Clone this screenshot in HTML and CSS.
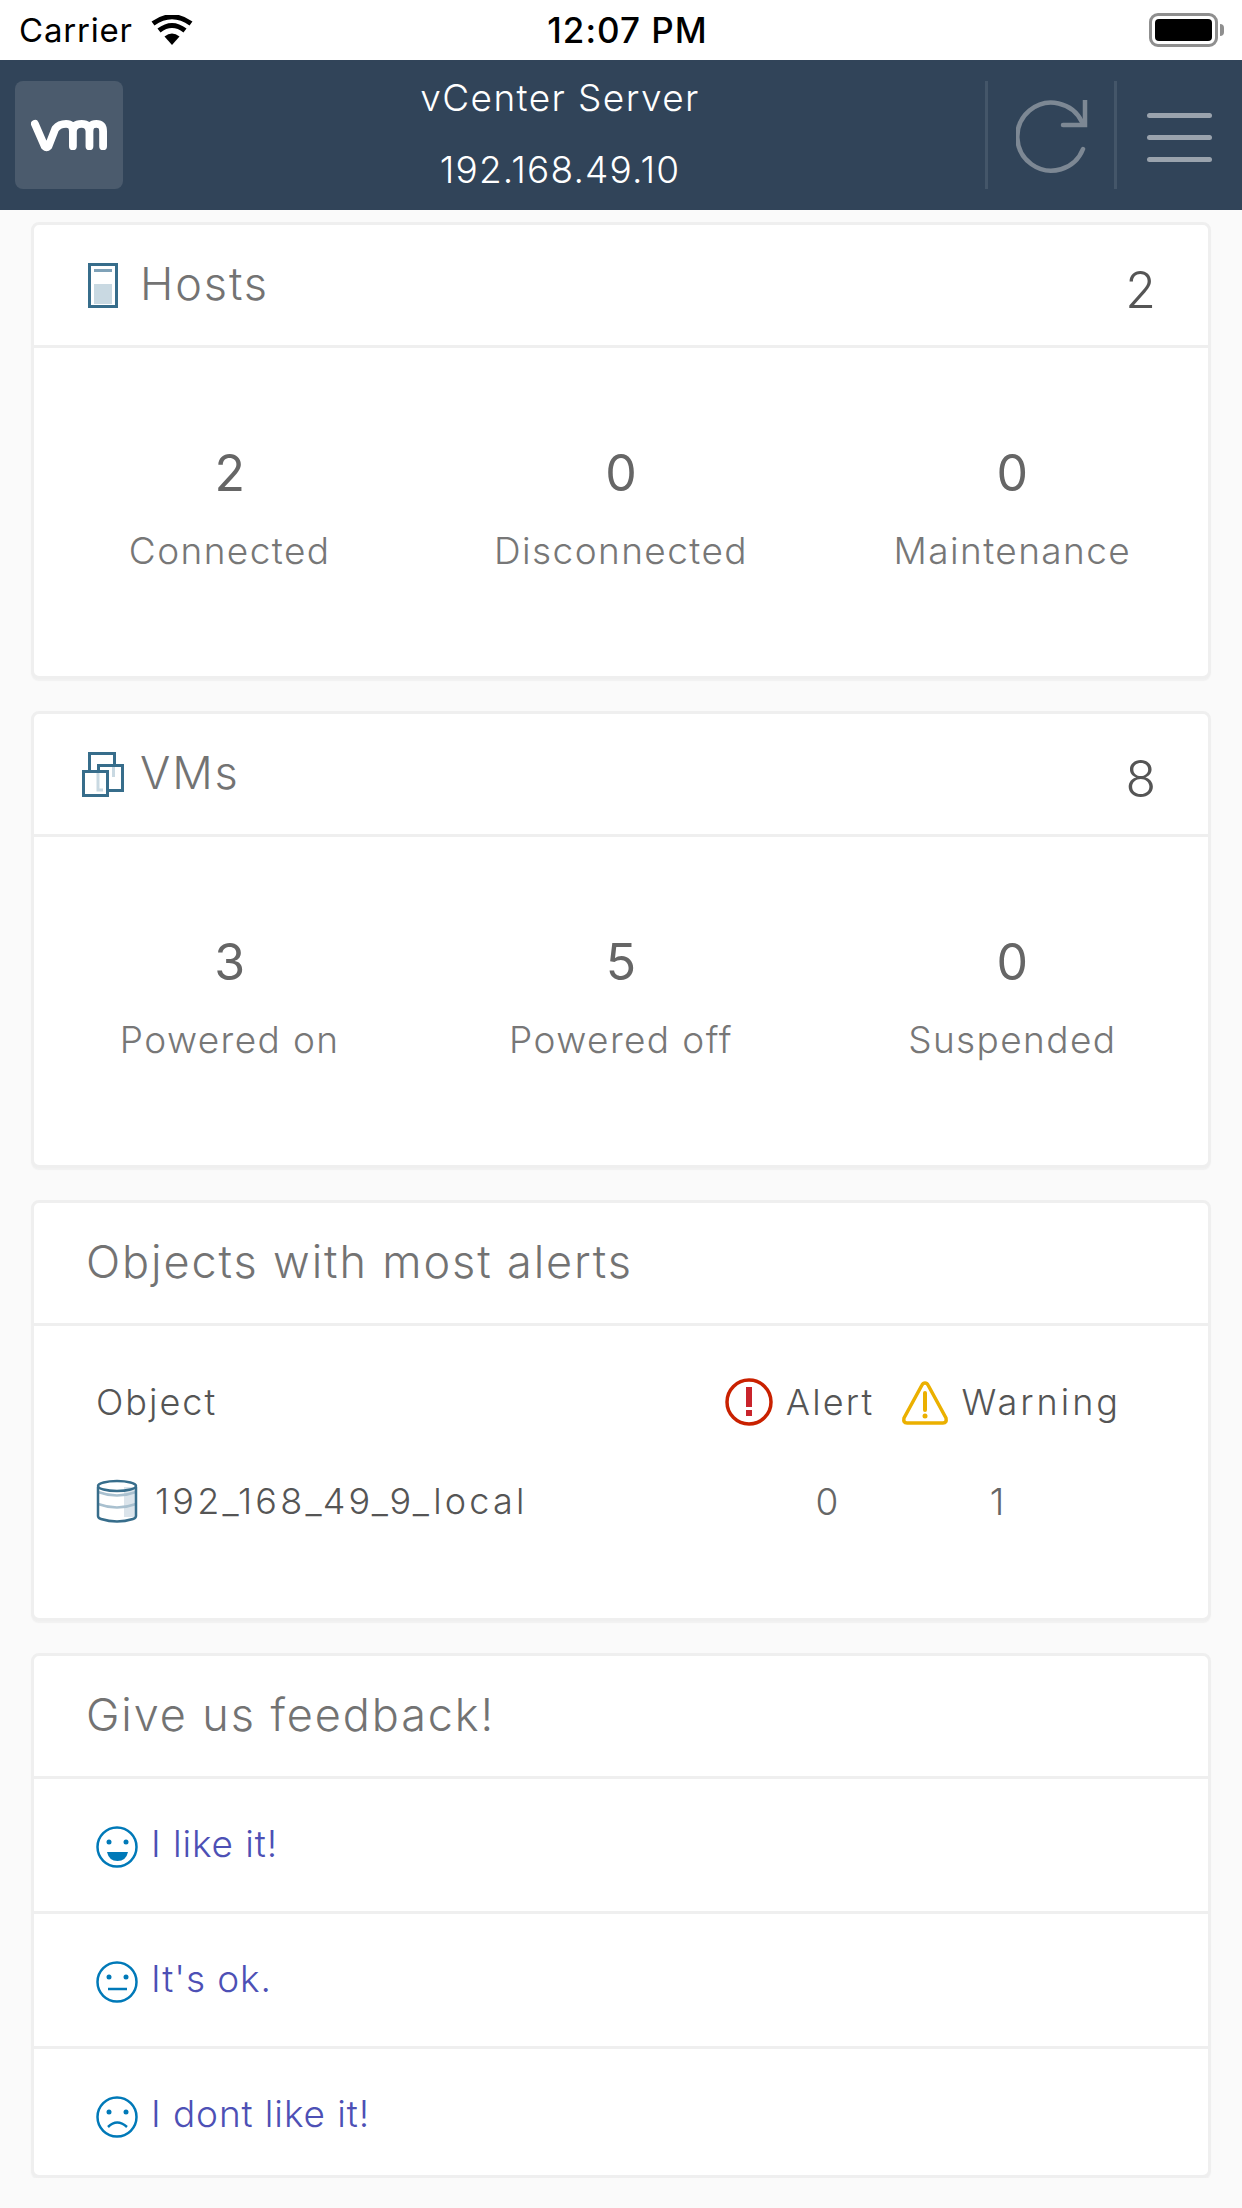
FILE: index.html
```html
<!DOCTYPE html>
<html lang="en">
<head>
  <meta charset="UTF-8" />
  <meta name="viewport" content="width=device-width, initial-scale=1.0" />
  <title>vCenter Server</title>
  <link rel="stylesheet" href="styles.css">
</head>
<body>
  <!-- Status bar -->
  <div class="status-bar">
    <div class="status-left">
      <span>Carrier</span>
      <svg class="wifi" viewBox="0 0 42 30" width="42" height="30">
        <path d="M21 30 L13.5 21.5 Q21 15.5 28.500 21.500 Z" fill="#000"/>
        <path d="M8 15.500 Q21 5.500 34 15.500" fill="none" stroke="#000" stroke-width="5"/>
        <path d="M2 8.500 Q21 -5 40 8.500" fill="none" stroke="#000" stroke-width="5"/>
      </svg>
    </div>
    <div class="status-time">12:07 PM</div>
    <div class="battery">
      <div class="battery-body"><div class="battery-fill"></div></div>
      <div class="battery-nub"></div>
    </div>
  </div>

  <!-- Nav -->
  <div class="navbar">
    <div class="logo">
      <svg viewBox="0 0 78 34" width="76" height="33" preserveAspectRatio="none">
        <path d="M4 5 L14 28 Q16 30 18 28 L25 10 Q29 5 36 5 Q43 5 43 13 V28 M43 13 Q43 5 52 5 Q60 5 60 13 V28 M60 13 Q60 5 67 5 Q74 5 74 13 V28" fill="none" stroke="#fff" stroke-width="8" stroke-linecap="round" stroke-linejoin="round"/>
      </svg>
    </div>
    <div class="nav-title">
      <div class="nav-name">vCenter Server</div>
      <div class="nav-ip">192.168.49.10</div>
    </div>
    <div class="nav-button refresh">
      <svg viewBox="0 0 72 74" width="72" height="74">
        <path d="M67 49 A34 34 0 1 1 66 22" fill="none" stroke="#7d8894" stroke-width="4.500" stroke-linecap="round"/>
        <path d="M69 0 V25 H47" fill="none" stroke="#7d8894" stroke-width="4.500" stroke-linecap="round"/>
      </svg>
    </div>
    <div class="nav-button menu">
      <div class="menu-line"></div>
      <div class="menu-line"></div>
      <div class="menu-line"></div>
    </div>
  </div>

  <div class="content">
    <!-- Hosts -->
    <div class="card">
      <div class="card-header">
        <div class="header-icon">
          <svg viewBox="0 0 30 45" width="30" height="45">
            <rect x="1.500" y="1.500" width="27" height="42" fill="#fff" stroke="#376d8b" stroke-width="3"/>
            <rect x="6" y="6" width="18" height="3" fill="#7fa2b8"/>
            <rect x="6" y="21" width="18" height="20" fill="#c9d9e2"/>
          </svg>
        </div>
        <div class="card-title">Hosts</div>
        <div class="card-count">2</div>
      </div>
      <div class="stats">
        <div class="stat"><div class="stat-num">2</div><div class="stat-label">Connected</div></div>
        <div class="stat"><div class="stat-num">0</div><div class="stat-label">Disconnected</div></div>
        <div class="stat"><div class="stat-num">0</div><div class="stat-label">Maintenance</div></div>
      </div>
    </div>

    <!-- VMs -->
    <div class="card">
      <div class="card-header">
        <div class="header-icon">
          <svg viewBox="0 0 42 45" width="42" height="45">
            <rect x="7.500" y="1.500" width="25" height="24" fill="#fff" stroke="#376d8b" stroke-width="3"/>
            <rect x="16.500" y="13.500" width="24" height="25" fill="#fff" stroke="#376d8b" stroke-width="3"/>
            <rect x="30" y="15" width="3" height="10" fill="#c9d9e2"/>
            <rect x="1.500" y="19.500" width="24" height="24" fill="#fff" stroke="#376d8b" stroke-width="3"/>
            <path d="M16 21 V38 H21" fill="none" stroke="#c9d9e2" stroke-width="3"/>
          </svg>
        </div>
        <div class="card-title">VMs</div>
        <div class="card-count">8</div>
      </div>
      <div class="stats">
        <div class="stat"><div class="stat-num">3</div><div class="stat-label">Powered on</div></div>
        <div class="stat"><div class="stat-num">5</div><div class="stat-label">Powered off</div></div>
        <div class="stat"><div class="stat-num">0</div><div class="stat-label">Suspended</div></div>
      </div>
    </div>

    <!-- Alerts table -->
    <div class="card">
      <div class="card-header plain">
        <div class="card-title">Objects with most alerts</div>
      </div>
      <div class="alerts">
        <div class="alerts-row">
          <div class="alerts-name object-head">Object</div>
          <svg class="alert-icon" viewBox="0 0 48 48" width="48" height="48">
            <circle cx="24" cy="24" r="22" fill="none" stroke="#c92100" stroke-width="3.500"/>
            <rect x="21" y="9" width="6" height="20" fill="#c9242b"/>
            <rect x="21" y="32" width="6" height="6" fill="#c9242b"/>
          </svg>
          <div class="alerts-head">Alert</div>
          <svg class="warn-icon" viewBox="0 0 48 45" width="48" height="45">
            <path d="M24 3 Q26 3 27 5 L45 38 Q46 43 42 43 H6 Q2 43 3 38 L21 5 Q22 3 24 3 Z" fill="none" stroke="#ebb000" stroke-width="3.500" stroke-linejoin="round"/>
            <path d="M24 13 V30" stroke="#ebb000" stroke-width="4" stroke-linecap="round"/>
            <circle cx="24" cy="36" r="2.500" fill="#ebb000"/>
          </svg>
          <div class="alerts-head wide">Warning</div>
        </div>
        <div class="alerts-row data-row">
          <svg class="db-icon" viewBox="0 0 42 44" width="42" height="44">
            <path d="M28 8 H40 V38 H28 Z" fill="#dbe4eb"/>
            <path d="M2 13 Q21 20 40 13 M2 25 Q21 32 40 25" fill="none" stroke="#a9c0cf" stroke-width="2.500"/>
            <path d="M2 8 V37 Q2 39 5 40 Q21 45 37 40 Q40 39 40 37 V8" fill="none" stroke="#376d8b" stroke-width="2.500"/>
            <ellipse cx="21" cy="7" rx="19" ry="5" fill="none" stroke="#376d8b" stroke-width="2.500"/>
          </svg>
          <div class="alerts-name object-name">192_168_49_9_local</div>
          <div class="alerts-count first">0</div>
          <div class="alerts-count last">1</div>
        </div>
      </div>
    </div>

    <!-- Feedback -->
    <div class="card">
      <div class="card-header plain">
        <div class="card-title">Give us feedback!</div>
      </div>
      <a class="feedback-row">
        <svg class="face" viewBox="0 0 42 42" width="42" height="42">
          <circle cx="21" cy="21" r="19.500" fill="none" stroke="#0079b8" stroke-width="2.500"/>
          <circle cx="13" cy="16" r="2.500" fill="#0079b8"/>
          <circle cx="30" cy="16" r="2.500" fill="#0079b8"/>
          <path d="M11 26 H32 Q30 35 21.500 35 Q13 35 11 26 Z" fill="#0079b8"/>
        </svg>
        <span>I like it!</span>
      </a>
      <a class="feedback-row">
        <svg class="face" viewBox="0 0 42 42" width="42" height="42">
          <circle cx="21" cy="21" r="19.500" fill="none" stroke="#0079b8" stroke-width="2.500"/>
          <circle cx="13" cy="16" r="2.500" fill="#0079b8"/>
          <circle cx="30" cy="16" r="2.500" fill="#0079b8"/>
          <path d="M12 28 H31" fill="none" stroke="#0079b8" stroke-width="2.500"/>
        </svg>
        <span>It's ok.</span>
      </a>
      <a class="feedback-row">
        <svg class="face" viewBox="0 0 42 42" width="42" height="42">
          <circle cx="21" cy="21" r="19.500" fill="none" stroke="#0079b8" stroke-width="2.500"/>
          <circle cx="13" cy="16" r="2.500" fill="#0079b8"/>
          <circle cx="30" cy="16" r="2.500" fill="#0079b8"/>
          <path d="M12 31 Q21 22 31 31" fill="none" stroke="#0079b8" stroke-width="2.500"/>
        </svg>
        <span>I dont like it!</span>
      </a>
    </div>
  </div>
</body>
</html>
```

FILE: styles.css
```css
body {
  font-family: 'Inter', 'Lato', sans-serif;
  font-weight: 300;
  margin: 0;
  padding: 0;
  background-color: #fafafa;
  color: #666;
}
.status-bar {
  height: 60px;
  background-color: #fff;
  display: grid;
  grid-template-columns: 1fr auto 1fr;
  align-items: center;
  color: #000;
  font-size: 33px;
  font-weight: 400;
  padding: 0 18px 0 19px;
}
.status-left {
  display: flex;
  align-items: center;
  gap: 18px;
  letter-spacing: 0.8px;
}
.status-time {
  font-size: 35px;
  font-weight: 500;
  letter-spacing: 1px;
  margin-left: 12px;
}
.wifi {
  display: block;
}
.battery {
  display: flex;
  align-items: center;
  justify-content: flex-end;
  gap: 2px;
}
.battery-body {
  width: 69px;
  height: 34px;
  box-sizing: border-box;
  border: 3px solid #8f8f8f;
  border-radius: 9px;
  padding: 3px;
}
.battery-fill {
  height: 100%;
  background-color: #000;
  border-radius: 4px;
}
.battery-nub {
  width: 4px;
  height: 12px;
  background-color: #8f8f8f;
  border-radius: 0 4px 4px 0;
}
.navbar {
  height: 150px;
  box-sizing: border-box;
  background-color: #314459;
  display: flex;
  padding: 21px 0 21px 15px;
}
.logo {
  width: 108px;
  background-color: #4b5b6d;
  border-radius: 8px;
  display: flex;
  align-items: center;
  justify-content: center;
}
.nav-title {
  flex: 1;
  padding-left: 12px;
  color: #fff;
  font-size: 37px;
  text-align: center;
  display: flex;
  flex-direction: column;
  justify-content: space-between;
  line-height: 46px;
  margin: -6px 0 -4px;
}
.nav-name {
  letter-spacing: 1.4px;
}
.nav-ip {
  letter-spacing: 1.2px;
}
.nav-button {
  border-left: 3px solid #445669;
  box-sizing: border-box;
  width: 129px;
}
.refresh {
  padding: 19px 0 0 28px;
}
.menu {
  width: 128px;
  padding: 32px 0 0 30px;
  display: flex;
  flex-direction: column;
  gap: 17px;
}
.menu-line {
  width: 65px;
  height: 5px;
  background-color: #9aa3ad;
  border-radius: 3px;
}
.content {
  padding: 12px 31px 0;
  display: flex;
  flex-direction: column;
  gap: 32px;
}
.card {
  background-color: #fff;
  border: 3px solid #efefef;
  border-radius: 8px;
  box-shadow: 0 2px 1px #f1f1f1;
}
.card-header {
  box-sizing: border-box;
  border-bottom: 3px solid #efefef;
  height: 123px;
  display: flex;
  align-items: center;
  padding: 0 52px 0 48px;
}
.card-header.plain {
  padding-left: 52px;
}
.header-icon {
  width: 42px;
  margin-right: 16px;
  display: flex;
  justify-content: center;
}
.header-icon svg {
  display: block;
}
.card-title {
  flex: 1;
  font-size: 45px;
  color: #737373;
  margin-top: -4px;
  letter-spacing: 1.9px;
}
.card-count {
  font-size: 50px;
  color: #555;
  margin-top: 10px;
}
.stats {
  height: 328px;
  display: grid;
  grid-template-columns: 1fr 1fr 1fr;
  align-items: center;
  text-align: center;
}
.stat {
  padding-bottom: 7px;
}
.stat-num {
  font-size: 50px;
  font-weight: 400;
  color: #666;
  line-height: 60px;
  margin-bottom: 25px;
}
.stat-label {
  font-size: 37px;
  color: #777;
  line-height: 46px;
  letter-spacing: 1.4px;
}
.alerts {
  padding: 38px 87px 79px 62px;
}
.alerts-row {
  height: 76px;
  display: flex;
  align-items: center;
  font-size: 36px;
  color: #555;
}
.data-row {
  margin-top: 23px;
}
.alerts-name {
  flex: 1;
}
.object-head {
  letter-spacing: 2px;
}
.object-name {
  letter-spacing: 3.2px;
}
.alerts-head {
  letter-spacing: 2.2px;
}
.alerts-head.wide {
  letter-spacing: 3px;
}
.alert-icon {
  margin-right: 13px;
}
.warn-icon {
  margin: 0 13px 0 26px;
}
.db-icon {
  margin-right: 17px;
}
.alerts-count {
  width: 60px;
  text-align: center;
  font-size: 37px;
  color: #666;
}
.alerts-count.first {
  margin-right: 110px;
}
.alerts-count.last {
  margin-right: 94px;
}
.feedback-row {
  display: flex;
  align-items: flex-start;
  gap: 13px;
  padding: 42px 0 43px 62px;
  border-top: 3px solid #efefef;
  font-size: 37px;
  line-height: 46px;
  color: #4d50b5;
  letter-spacing: 0.9px;
}
.card-header.plain + .feedback-row {
  border-top: none;
}
.feedback-row:last-child {
  padding-bottom: 37px;
}
.face {
  margin-top: 5px;
  flex-shrink: 0;
}
```
